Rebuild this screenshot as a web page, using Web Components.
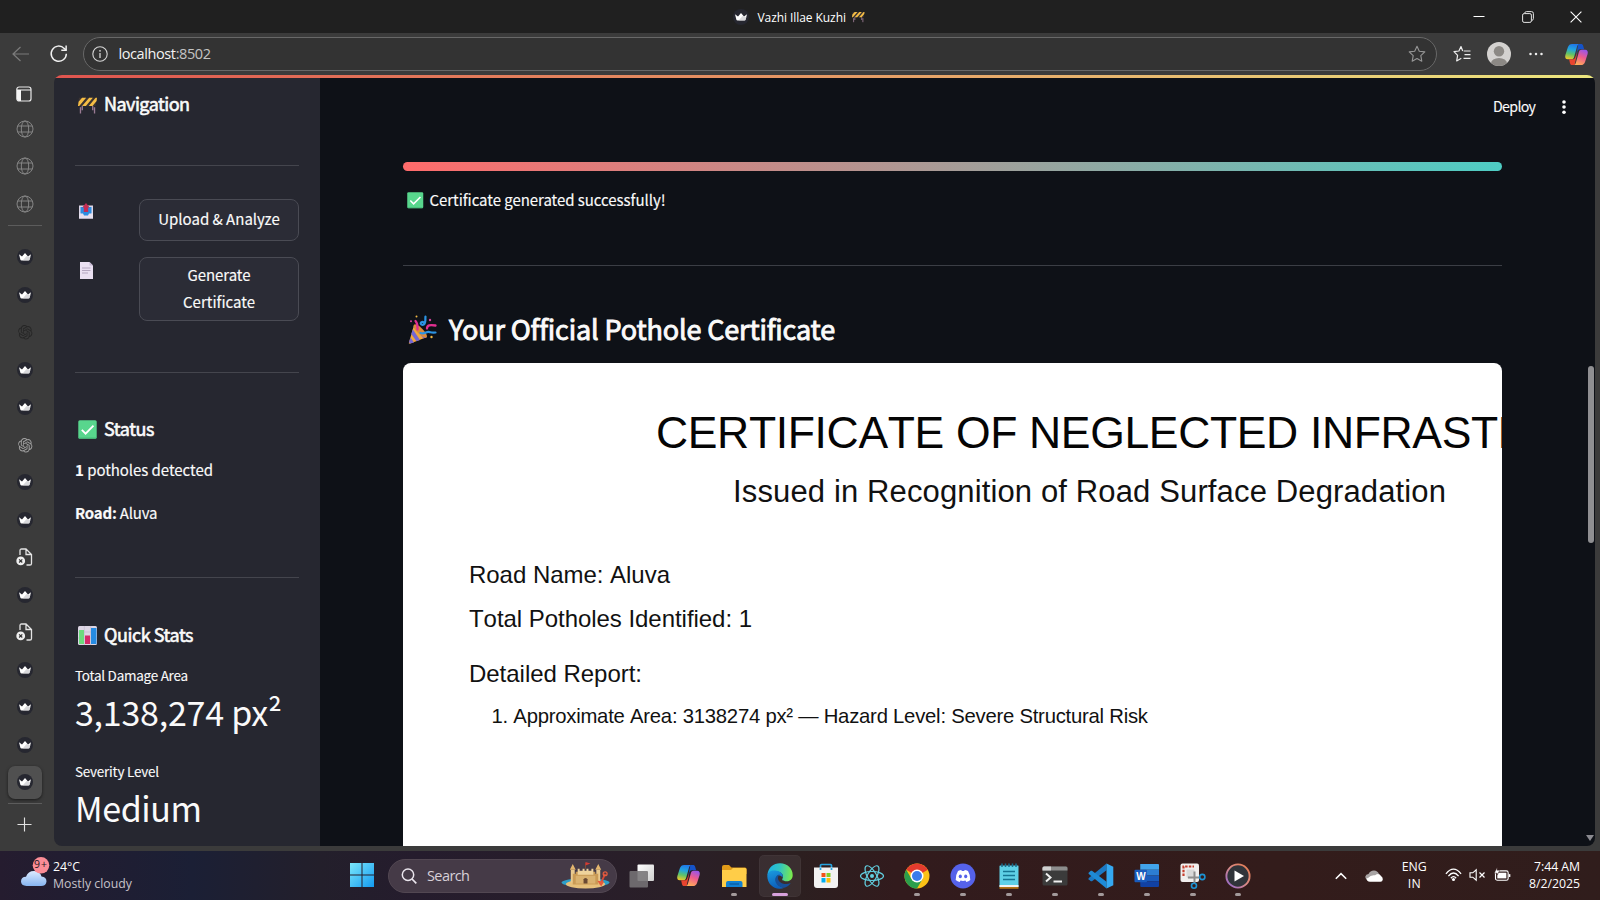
<!DOCTYPE html>
<html lang="en">
<head>
<meta charset="utf-8">
<title>Vazhi Illae Kuzhi</title>
<style>
html,body{margin:0;height:100%;background:#202020;overflow:hidden}
</style>
</head>
<body>
<desktop-screen></desktop-screen>
<script>
const crown = `<circle cx="8" cy="8" r="8" fill="#262730"/><path d="M2 5.2 5 7.6 8 3.9 11 7.6 14 5.2 12.6 10.8Q12.4 11.6 11.5 11.6H4.5Q3.6 11.6 3.4 10.8Z" fill="#fff"/><path d="M5.6 11.6 9.6 7 13.4 8.2 12.6 10.8Q12.4 11.6 11.5 11.6Z" fill="#c9c9cd" opacity=".7"/>`;
const globe = `<g fill="none" stroke="#858585" stroke-width="1"><circle cx="9" cy="9" r="8"/><ellipse cx="9" cy="9" rx="3.7" ry="8"/><path d="M1.8 6h14.4M1.8 12h14.4"/></g>`;
const petals = c => `<path fill="${c}" d="M22.2819 9.8211a5.9847 5.9847 0 0 0-.5157-4.9108 6.0462 6.0462 0 0 0-6.5098-2.9A6.0651 6.0651 0 0 0 4.9807 4.1818a5.9847 5.9847 0 0 0-3.9977 2.9 6.0462 6.0462 0 0 0 .7427 7.0966 5.98 5.98 0 0 0 .511 4.9107 6.051 6.051 0 0 0 6.5146 2.9001A5.9847 5.9847 0 0 0 13.2599 24a6.0557 6.0557 0 0 0 5.7718-4.2058 5.9894 5.9894 0 0 0 3.9977-2.9001 6.0557 6.0557 0 0 0-.7475-7.0729zm-9.022 12.6081a4.4755 4.4755 0 0 1-2.8764-1.0408l.1419-.0804 4.7783-2.7582a.7948.7948 0 0 0 .3927-.6813v-6.7369l2.02 1.1686a.071.071 0 0 1 .038.052v5.5826a4.504 4.504 0 0 1-4.4945 4.4944zm-9.6607-4.1254a4.4708 4.4708 0 0 1-.5346-3.0137l.142.0852 4.783 2.7582a.7712.7712 0 0 0 .7806 0l5.8428-3.3685v2.3324a.0804.0804 0 0 1-.0332.0615L9.74 19.9502a4.4992 4.4992 0 0 1-6.1408-1.6464zM2.3408 7.8956a4.485 4.485 0 0 1 2.3655-1.9728V11.6a.7664.7664 0 0 0 .3879.6765l5.8144 3.3543-2.0201 1.1685a.0757.0757 0 0 1-.071 0l-4.8303-2.7865A4.504 4.504 0 0 1 2.3408 7.872zm16.5963 3.8558L13.1038 8.364 15.1192 7.2a.0757.0757 0 0 1 .071 0l4.8303 2.7913a4.4944 4.4944 0 0 1-.6765 8.1042v-5.6772a.79.79 0 0 0-.407-.667zm2.0107-3.0231l-.142-.0852-4.7735-2.7818a.7759.7759 0 0 0-.7854 0L9.409 9.2297V6.8974a.0662.0662 0 0 1 .0284-.0615l4.8303-2.7866a4.4992 4.4992 0 0 1 6.6802 4.66zM8.3065 12.863l-2.02-1.1638a.0804.0804 0 0 1-.038-.0567V6.0742a4.4992 4.4992 0 0 1 7.3757-3.4537l-.142.0805L8.704 5.459a.7948.7948 0 0 0-.3927.6813zm1.0976-2.3654l2.602-1.4998 2.6069 1.4998v2.9994l-2.5974 1.4997-2.6067-1.4997Z"/>`;
const barrier = `<path d="M2.6 13v6.5M17.4 13v6.5M4.500 11v5M15.500 11v5" stroke="#9a7b94" stroke-width="1.400"/><path d="M1 3h19L18.500 11.500H0z" fill="#3c3432"/><path d="M.6 7 4.300 3H8.600L1.300 11.500H0zM4.300 11.500 11.800 3H15.600L8.300 11.500zM11.300 11.500 18.600 3H20L19.600 6.300 15.300 11.500z" fill="#f6be45"/>`;
const check = `<rect x=".3" y=".3" width="19.400" height="19.400" rx="1.600" fill="#58d68d"/><path d="M1 19h18" stroke="#45b978" stroke-width="1"/><path d="M4 10.300 8 14.400 16.300 6" fill="none" stroke="#fff" stroke-width="1.900"/>`;
const copilot = `<defs><linearGradient id="a" x1=".5" y1="0" x2=".3" y2="1"><stop stop-color="#2078e8"/><stop offset=".35" stop-color="#22a5df"/><stop offset=".65" stop-color="#5dc26a"/><stop offset="1" stop-color="#f0c92a"/></linearGradient><linearGradient id="b" x1=".7" y1="0" x2=".3" y2="1"><stop stop-color="#9a55e8"/><stop offset=".45" stop-color="#ee5b8e"/><stop offset="1" stop-color="#ffae55"/></linearGradient></defs><path d="M14 1h2.700c1.200 0 1.900.7 2.300 2l1 3.500h-4.500c-1.500 0-2.200 1-2.700 2.500L11 15z" fill="#1553c9"/><path d="M7.500 1H15c-1.500.300-2 1.400-2.500 3l-3 10.500c-.5 1.600-1.300 2.500-3 2.500H3c-2.300 0-3.300-1.800-2.600-4.500L3 4.500C3.700 2.200 5.300 1 7.500 1z" fill="url(#a)"/><path d="M10 23H7.600c-1.300 0-2-.7-2.400-2L4.300 17H8c1.600 0 2.400-1 2.900-2.700L13 9z" fill="#e8442f"/><path d="M16.500 23H9c1.500-.300 2-1.400 2.500-3l3-10.500c.5-1.600 1.300-2.500 3-2.500H21c2.300 0 3.300 1.800 2.600 4.500L21 19.500c-.7 2.300-2.300 3.500-4.500 3.500z" fill="url(#b)"/>`;
const pageX = `<g fill="none" stroke="#e4e4e4" stroke-width="1.300"><path d="M4 7V2.600Q4 1 5.600 1H10L15.500 6.500V15.400Q15.500 17 13.900 17H10.500M10 1V6.500H15.500"/></g><circle cx="4.700" cy="12.900" r="4.400" fill="#efefef"/><path d="M3.100 11.300 6.300 14.500M6.300 11.300 3.100 14.500" stroke="#333" stroke-width="1.200"/>`;
const ICONS = {
 crown:[16,16,crown], globe:[18,18,globe], gptDark:[24,24,petals('#262626')], gptLight:[24,24,petals('#a2a2a2')],
 barrier:[20,20,barrier], check:[20,20,check], copilot:[24,24,copilot], pageX:[18,18,pageX],
 back:[18,16,`<path d="M8.500 1 1 8 8.500 15M1 8H17" fill="none" stroke="#7b7b7b" stroke-width="1.200"/>`],
 reload:[18,18,`<path d="M16.800 9A7.800 7.800 0 1 1 14.600 3.500L16.500 5.200" fill="none" stroke="#f0f0f0" stroke-width="1.500"/><path d="M16.600.5V5.500H11.600" fill="none" stroke="#f0f0f0" stroke-width="1.500"/>`],
 info:[16,16,`<circle cx="8" cy="8" r="7.200" fill="none" stroke="#d6d6d6" stroke-width="1.100"/><path d="M8 7V12" stroke="#d6d6d6" stroke-width="1.300"/><circle cx="8" cy="4.800" r=".9" fill="#d6d6d6"/>`],
 panel:[16,16,`<rect x=".8" y="1" width="14.200" height="14" rx="2.300" fill="none" stroke="#e8e8e8" stroke-width="1.200"/><path d="M1 4H15" stroke="#e8e8e8" stroke-width="1.100"/><path d="M1 4H5V15H3Q1 15 1 13z" fill="#f4f4f4"/>`],
 plus:[16,16,`<path d="M8 .5V15.500M.5 8H15.500" stroke="#e2e2e2" stroke-width="1.200"/>`],
 min:[12,12,`<path d="M.5 5.500H11.500" stroke="#fff" stroke-width="1"/>`],
 restore:[12,12,`<rect x=".6" y="2.600" width="8.800" height="8.800" rx="1.500" fill="none" stroke="#e5e5e5"/><path d="M2.700 2Q3 .6 4.500.6H9.500Q11.400.6 11.400 2.500V7.500Q11.400 9 10 9.400" fill="none" stroke="#e5e5e5"/>`],
 close:[12,12,`<path d="M.6.6 11.400 11.400M11.400.6.6 11.400" stroke="#fff" stroke-width="1.100"/>`],
 star:[18,18,`<path d="M9 1.200 11.300 6.200 16.800 6.900 12.800 10.700 13.800 16.200 9 13.500 4.200 16.200 5.200 10.700 1.200 6.900 6.700 6.200Z" fill="none" stroke="#969696" stroke-width="1.100" stroke-linejoin="round"/>`],
 starList:[18,18,`<path d="M10.700 6H17.500M9.700 6 8 1.500 5.900 6 1 6.700 4.600 10.400 3.700 15.900 8.300 13.300M11.500 9.700H17.500M10.500 13.400H17.500" fill="none" stroke="#eee" stroke-width="1.200" stroke-linejoin="round"/>`],
 person:[24,24,`<clipPath id="p"><circle cx="12" cy="12" r="12"/></clipPath><circle cx="12" cy="12" r="12" fill="#d4d2d0"/><g clip-path="url(#p)" fill="#8c8985"><circle cx="12" cy="9.300" r="5.200"/><ellipse cx="12" cy="21.500" rx="8" ry="5.500"/></g>`],
 dots:[14,4,`<g fill="#eee"><circle cx="1.500" cy="2" r="1.250"/><circle cx="7" cy="2" r="1.250"/><circle cx="12.500" cy="2" r="1.250"/></g>`],
 vdots:[4,16,`<g fill="#fff"><circle cx="2" cy="3" r="1.800"/><circle cx="2" cy="8" r="1.800"/><circle cx="2" cy="13.300" r="1.800"/></g>`],
 outbox:[14,16,`<path d="M0 2.500H14V15.500H0z" fill="#dcd6e8"/><path d="M1.500 4H12.500V10.500L9.500 13H4.500L1.500 10.500z" fill="#2d8de0"/><path d="M0 10.500H4L5 12.500H9L10 10.500H14V15.500H0z" fill="#e6e0ee"/><path d="M4.800 4.500H3.200L7 0 10.800 4.500H9.200V9H4.800z" fill="#c32d54"/>`],
 page:[13,17,`<path d="M0 0H9.500L13 3.500V17H0z" fill="#eae0f2"/><path d="M9.500 0V3.500H13z" fill="#c6b9d3"/><path d="M2 6H10.500M2 8.500H10.500M2 11H8" stroke="#b4a6c0" stroke-width="1"/>`],
 chart:[19,19,`<rect width="19" height="19" rx="1.500" fill="#ddd6e4"/><path d="M6.300 0V19M12.700 0V19M0 6H19M0 12H19" stroke="#c1b7cc" stroke-width=".6"/><path d="M1 4H6V18H1z" fill="#6cdb7d"/><path d="M7 9.500H12V18H7z" fill="#d32b6a"/><path d="M13 2H18.500V18H13z" fill="#268be2"/>`],
 party:[29,29,`<path d="M6 10 1 27.500Q0 29 2.500 28.500L19 22z" fill="#f3a83c"/><path d="M4.800 14.200 12 25 8.500 26.300 3.300 19zM6.500 10 16.500 20 18.800 22 15.600 23.400 5.500 12zM2.500 22.500 6 27.500 2 28.500 1 27z" fill="#7467d3"/><ellipse cx="12.300" cy="16" rx="3" ry="9" transform="rotate(-45 12.300 16)" fill="#dc8a3a"/><path d="M7.500 6C10 8.500 9.500 11 9.500 14.500M19 13.500C19 10 22 9.500 27.500 10.500" fill="none" stroke="#e22f90" stroke-width="2.300" stroke-linecap="round"/><path d="M17.500 1.500C17 5 18.500 9.500 14.500 9.800C11.500 9.500 12.500 5.500 16 7.500M12.500 18C17 19.500 18 16.500 20.500 16.800S23 18 27.500 17.500" fill="none" stroke="#2b93e3" stroke-width="2.200" stroke-linecap="round"/><g fill="#d1439d"><circle cx="3" cy="6.200" r="1"/><circle cx="22" cy="5" r="1.200"/></g><g fill="#f0b945"><circle cx="8.500" cy="1.500" r="1"/><circle cx="23.500" cy="22" r="1.200"/></g>`],
 weather:[28,30,`<defs><linearGradient id="w" x1="0" y1="0" x2="0" y2="1"><stop stop-color="#dcebff"/><stop offset="1" stop-color="#86b4f0"/></linearGradient></defs><path d="M5.500 29Q0 28.500 0 24.500Q0 20 5 19.800Q7 14 13 14Q19 14 20.500 19.500Q25.500 20 25.500 24.500Q25 29 20 29z" fill="url(#w)"/><circle cx="20" cy="8.300" r="8.300" fill="#fb8c96"/>`],
 windows:[24,24,`<defs><linearGradient id="q" x1="0" y1="0" x2="24" y2="24" gradientUnits="userSpaceOnUse"><stop stop-color="#7ce8fb"/><stop offset="1" stop-color="#139af0"/></linearGradient></defs><path d="M0 0H11.500V11.500H0zM12.500 0H24V11.500H12.500zM0 12.500H11.500V24H0zM12.500 12.500H24V24H12.500z" fill="url(#q)"/>`],
 search:[16,16,`<circle cx="7" cy="6.800" r="5.700" fill="none" stroke="#ebe6ee" stroke-width="1.500"/><path d="M11 11 15.300 15.300" stroke="#ebe6ee" stroke-width="1.700"/>`],
 castle:[52,28,`<ellipse cx="25" cy="21" rx="24.500" ry="4.500" fill="#2d9fc9"/><ellipse cx="25" cy="22.500" rx="20" ry="4.500" fill="#e6c07b"/><path d="M10 8H14V21H10zM36 8H40V21H36z" fill="#e9c98e"/><path d="M9 8 12 2 15 8zM35 8 38 2 41 8z" fill="#e3b66e"/><path d="M12 12H15V10H18V12H20V10H23V12H27V10H29V12H32V10H35V12H38V23H12z" fill="#c99a55"/><path d="M15 14H35V22H15z" fill="#dab270"/><path d="M17 7H19V9H22V7H24V9H26V7H28V9H31V7H33V13H17z" fill="#efd39c"/><path d="M23 22V17.500Q25 15 27 17.500V22z" fill="#6a4a33"/><path d="M25 7V1" stroke="#7b4c34"/><path d="M25 0 30 1.500 25 3.500z" fill="#d53a35"/><path d="M40 23 45 12" stroke="#d84a36" stroke-width="1.800"/><circle cx="45" cy="12" r="2" fill="none" stroke="#e35d40" stroke-width="1.300"/><path d="M37 19 44 20 41 25z" fill="#e65a3c"/>`],
 taskview:[26,24,`<defs><linearGradient id="t" x2="1" y2="1"><stop stop-color="#fff"/><stop offset="1" stop-color="#cfcfcf"/></linearGradient></defs><rect x="8.500" y=".5" width="16.500" height="16.500" rx="1" fill="url(#t)"/><rect x=".5" y="7" width="18.500" height="16.500" rx="1" fill="#767476" opacity=".88"/>`],
 explorer:[26,24,`<path d="M1 3Q1 1 3 1H8L10.500 3.500H24Q25.500 3.500 25.500 5V10H1z" fill="#e19b19"/><path d="M1 6H10L12 4H24Q25.500 4 25.500 5.500V23H1z" fill="#ffcd48"/><path d="M5 23V19Q5 17 7 17H19.500Q21.500 17 21.500 19V23z" fill="#1181d2"/><path d="M8.500 20H18" stroke="#0b5c9f" stroke-width="1.300"/>`],
 edge:[26,26,`<defs><linearGradient id="e" x1="0" y1=".3" x2="1" y2=".4"><stop stop-color="#1bb4e7"/><stop offset=".5" stop-color="#33c6bd"/><stop offset="1" stop-color="#7bea4c"/></linearGradient><linearGradient id="f" x1="0" y1="0" x2=".3" y2="1"><stop stop-color="#1a9ce0"/><stop offset="1" stop-color="#0d60bb"/></linearGradient></defs><path d="M.5 12C1 4.500 6.500.3 13 .3C20.500.3 25.700 5.500 25.700 12C25.700 16 23 18.300 19.500 18.300C16.500 18.300 14.500 17.300 15.500 15.500C17.500 12 14 8.500 9.500 8.500C5 8.500 2 9.500.5 12z" fill="url(#e)"/><path d="M.3 13C.5 8.500 5 6.800 9.500 7.800C14 8.500 16.800 11.500 15.500 14.500C12 10 8 14 9 18C10 22.500 14.500 25 18 24.500C9 28.500.3 22 .3 13z" fill="url(#f)"/><path d="M10.500 12C5.500 16 9 25 18 24.500C20.500 23.500 22.500 22 23.700 20C19 22.500 11.500 20.500 11 15.500C11 13.500 11.500 12.500 13 11.500z" fill="#174f98"/>`],
 store:[26,26,`<path d="M7.500 6V2.500Q7.500 1.500 8.500 1.500H17.500Q18.500 1.500 18.500 2.500V6" fill="none" stroke="#27a4df" stroke-width="1.700"/><path d="M1 4.500H25V22Q25 25 22 25H4Q1 25 1 22z" fill="#f2f2f2"/><path d="M7.500 5V7M18.500 5V7" stroke="#27a4df" stroke-width="1.700"/><path d="M8.500 10H12.500V14H8.500z" fill="#f1511b"/><path d="M13.500 10H17.500V14H13.500z" fill="#80cc28"/><path d="M8.500 15H12.500V19.500H8.500z" fill="#00adef"/><path d="M13.500 15H17.500V19.500H13.500z" fill="#fbbc09"/>`],
 react:[26,26,`<g fill="none" stroke="#62cfe0" stroke-width="1.200"><ellipse cx="13" cy="13" rx="11.500" ry="4.500"/><ellipse cx="13" cy="13" rx="11.500" ry="4.500" transform="rotate(60 13 13)"/><ellipse cx="13" cy="13" rx="11.500" ry="4.500" transform="rotate(120 13 13)"/></g><circle cx="13" cy="13" r="2" fill="#62cfe0"/>`],
 chrome:[26,26,`<circle cx="13" cy="13" r="12.500" fill="#fbc116"/><path d="M13 13 2.200 6.700A12.500 12.500 0 0 1 23.800 6.700z" fill="#e33b2e"/><path d="M2.200 6.700A12.500 12.500 0 0 0 13 25.500L18.500 16 13 13 7.600 16z" fill="#2b9f4c"/><circle cx="13" cy="13" r="6.500" fill="#fff"/><circle cx="13" cy="13" r="5" fill="#3a7cec"/>`],
 discord:[26,26,`<circle cx="13" cy="13" r="12.500" fill="#5562ea"/><path d="M8 8Q10 7 11.300 7L11.800 8Q13 7.800 14.200 8L14.700 7Q16 7 18 8Q20.500 12 20.300 17Q18.500 18.600 16.300 19L15.500 17.600Q13 18.200 10.500 17.600L9.700 19Q7.500 18.600 5.700 17Q5.500 12 8 8z" fill="#fff"/><ellipse cx="10.300" cy="13.400" rx="1.600" ry="1.800" fill="#5562ea"/><ellipse cx="15.700" cy="13.400" rx="1.600" ry="1.800" fill="#5562ea"/>`],
 notepad:[22,26,`<path d="M2 2.500H20Q20.500 2.500 20.500 3V24H1.500V3z" fill="#5fd0e6"/><path d="M1.500 22H20.500V24H1.500z" fill="#f2f2f2"/><path d="M1.500 24H20.500V25.800H1.500z" fill="#b37414"/><path d="M4 .6V4M7.500.6V4M11 .6V4M14.500.6V4M18 .6V4" stroke="#196e8d" stroke-width="1.500"/><path d="M5 8.500H17M5 12.500H17M5 16.500H17" stroke="#167593" stroke-width="1.400"/>`],
 terminal:[26,20,`<rect x=".5" y=".5" width="25" height="19" rx="1.500" fill="#3b3b3b"/><path d="M.5 4.500V2Q.5.5 2 .5H24Q25.500.5 25.500 2V4.500z" fill="#8d8d8d"/><path d="M.5 4.500V2Q.5.5 2 .5H9V4.500z" fill="#d0d0d0"/><path d="M4 7.500 8.500 11.500 4 15.500M11.500 15.500H20" fill="none" stroke="#f0f0f0" stroke-width="2"/>`],
 vscode:[26,26,`<path d="M18.500.6V7.300L4 18.300 2.800 18.300.6 16.300Q.2 15.700.8 15.100z" fill="#1b79c5"/><path d="M18.500 25.400V18.700L4 7.700 2.800 7.700.6 9.700Q.2 10.300.8 10.900z" fill="#1e8ad6"/><path d="M18.500.6 25.300 3.800V22.200L18.500 25.400z" fill="#35a9f2"/>`],
 word:[26,24,`<path d="M6.500 0H25Q26 0 26 1V6H6.500z" fill="#42a4eb"/><path d="M6.500 6H26V12H6.500z" fill="#2c7dd3"/><path d="M6.500 12H26V18H6.500z" fill="#195abb"/><path d="M6.500 18H26V23Q26 24 25 24H7.500Q6.500 24 6.500 23z" fill="#1141a3"/><rect x=".5" y="6" width="13" height="13" rx="1" fill="#185bbd"/>`],
 snip:[26,26,`<rect x=".5" y=".5" width="18.500" height="18.500" rx="2" fill="#f1efee"/><path d="M3.500 13V3.500H14" fill="none" stroke="#c63e2e" stroke-width="2.200" stroke-dasharray="2.500 1.200"/><path d="M6.500 14V7.500Q6.500 6.500 7.500 6.500H14.500V13L12 15.500H8z" fill="#d9d9d9"/><path d="M14.500 8.500V20M8 14.500H20" stroke="#8d8d8d" stroke-width="2"/><g fill="none" stroke="#1c93d4" stroke-width="1.600"><circle cx="22.300" cy="14" r="2.600"/><circle cx="14" cy="22.800" r="2.500"/></g>`],
 media:[26,26,`<defs><linearGradient id="m" x1="0" y1="1" x2="1" y2="0"><stop stop-color="#8d66d5"/><stop offset=".5" stop-color="#d98a86"/><stop offset="1" stop-color="#e57a4c"/></linearGradient></defs><circle cx="13" cy="13" r="11.600" fill="#30343a" stroke="url(#m)" stroke-width="1.900"/><path d="M9.500 7.500 19 13 9.500 18.500z" fill="#fff"/>`],
 chev:[12,8,`<path d="M.8 6.800 6 1.600 11.200 6.800" fill="none" stroke="#fff" stroke-width="1.500"/>`],
 cloud:[18,12,`<path d="M3.500 10Q.2 9.500.3 6.500Q.8 4 3.500 4Q5 .5 9 .5Q12.500.5 14 4z" fill="#a8a4a4"/><path d="M5 11.800Q1.500 11.500 1.500 8.500L3 8Q6 4.500 10 5.300Q14 2.500 16 6Q18 7 17.800 9.500Q17.500 11.800 15.500 11.800z" fill="#fff"/>`],
 wifi:[18,14,`<g fill="none" stroke="#fff" stroke-width="1.400"><path d="M1 6.200Q9-3.800 17 6.200M3.600 8.600Q9 2 14.400 8.600M6.200 10.800Q9 7.600 11.800 10.800"/></g><circle cx="9" cy="12.200" r="1.600" fill="#fff"/>`],
 mute:[18,12,`<path d="M1 3.800H3.800L7.200.8V11.200L3.800 8.200H1z" fill="none" stroke="#fff" stroke-width="1.100"/><path d="M10.500 3.500 15.500 8.500M15.500 3.500 10.500 8.500" stroke="#fff" stroke-width="1.200"/>`],
 battery:[18,14,`<rect x="1.600" y="3" width="13.400" height="10" rx="2" fill="none" stroke="#fff" stroke-width="1.200"/><rect x="3.500" y="5" width="9.600" height="6" fill="#fff"/><path d="M16.500 6.500V9.500" stroke="#fff" stroke-width="1.600"/><path d="M.3 5.500 3.300-.5V2.500H6L3.500 7.500V5.500z" fill="#fff" stroke="#331c1b" stroke-width=".5"/>`]
};
class UiIcon extends HTMLElement{
 connectedCallback(){
  const [w,h,m]=ICONS[this.getAttribute('name')], W=this.getAttribute('w')||w, H=this.getAttribute('h')||h*W/w;
  this.attachShadow({mode:'open'}).innerHTML=`<style>:host{display:block;flex:none;width:${W}px;height:${H}px}svg{display:block;overflow:visible}</style><svg width="${W}" height="${H}" viewBox="0 0 ${w} ${h}" preserveAspectRatio="none">${m}</svg>`;
 }
}
customElements.define('ui-icon',UiIcon);

/* One line of text whose tracking is tuned so that it takes the width in "w".
   "semi" thickens the regular face slightly, "dy" nudges the baseline. */
class TextLine extends HTMLElement{
 connectedCallback(){
  const a=n=>this.getAttribute(n);
  const fam={app:'"Noto Sans CJK SC","Source Sans Pro",sans-serif',ui:'"Open Sans","Segoe UI",sans-serif',doc:'"Liberation Sans",Arial,sans-serif'}[a('font')||'app'];
  this.attachShadow({mode:'open'}).innerHTML=`<style>:host{display:block;flex:none;white-space:nowrap;font-family:${fam};font-size:${a('size')}px;font-weight:${a('weight')||400};line-height:${a('lh')||24}px;${a('font')==='doc'?'font-kerning:none;':''}${a('semi')?`-webkit-text-stroke:${a('semi')}px currentColor;`:''}}span{display:inline-block;transform:translateY(${a('dy')||0}px)}</style><span><slot></slot></span>`;
  const s=this.shadowRoot.querySelector('span'), w=+a('w');
  if(w){const n=this.textContent.length, r=s.getBoundingClientRect().width; s.style.letterSpacing=((w-r)/(n-1))+'px'; s.style.marginRight=(-(w-r)/(n-1))+'px';}
 }
}
customElements.define('text-line',TextLine);

const def=(tag,css,html)=>customElements.define(tag,class extends HTMLElement{
 connectedCallback(){ if(this.shadowRoot)return; this.attachShadow({mode:'open'}).innerHTML=`<style>*{box-sizing:border-box}${css}</style>${html}`; }
});

def('title-bar',`:host{display:flex;height:33px;background:#202020;color:#fff;align-items:center}
 .t{display:flex;align-items:center;margin-left:732.500px;flex:1}.t text-line{margin:0 6px 0 9px}
 .w{display:flex;align-items:center;gap:36.300px;margin-right:18px}`,
 `<div class="t"><ui-icon name="crown" w="16"></ui-icon><text-line font="ui" size="12" w="88.500" dy=".5">Vazhi Illae Kuzhi</text-line><ui-icon name="barrier" w="12.500"></ui-icon></div>
 <div class="w"><ui-icon name="min"></ui-icon><ui-icon name="restore"></ui-icon><ui-icon name="close"></ui-icon></div>`);

def('address-bar',`:host{display:flex;height:42px;background:#3b3b3b;align-items:center;padding-left:12px}
 .u{display:flex;align-items:center;height:34px;width:1354px;margin-left:15.500px;border:1px solid #686868;border-radius:17px;background:#333;color:#f2f2f2;padding:0 10px 0 8px}
 .u text-line{margin-left:11px;flex:1}.sp{width:19.500px}`,
 `<ui-icon name="back" w="18"></ui-icon><div class="sp"></div><ui-icon name="reload" w="17.500"></ui-icon>
 <div class="u"><ui-icon name="info"></ui-icon><text-line font="ui" size="14.500" w="92.500">localhost<span style="color:#c4c4c4">:8502</span></text-line><ui-icon name="star"></ui-icon></div>
 <ui-icon name="starList" style="margin-left:16px"></ui-icon><ui-icon name="person" style="margin-left:16px"></ui-icon><ui-icon name="dots" style="margin-left:18px"></ui-icon><ui-icon name="copilot" w="23" style="margin-left:22px"></ui-icon>`);

const rail=['crown','crown','gptDark','crown','crown','gptLight','crown','crown','pageX','crown','pageX','crown','crown','crown','crown'];
def('tab-rail',`:host{display:flex;flex-direction:column;width:54px;height:776px;background:#3b3b3b;padding:0 4px 0 0;align-items:center}
 .c{height:37.500px;width:50px;display:flex;align-items:center;justify-content:center;flex:none}
 .d{width:34px;height:1px;background:#5c5c5c;flex:none}
 .on{width:34px;height:33px;border-radius:7px;background:#505050;box-shadow:0 1px 3px #1a1a1a;display:flex;align-items:center;justify-content:center}`,
 `<div class="c" style="height:35px;padding-top:3px;padding-right:2px"><ui-icon name="panel"></ui-icon></div>
 <div class="c"><ui-icon name="globe"></ui-icon></div><div class="c"><ui-icon name="globe"></ui-icon></div><div class="c"><ui-icon name="globe"></ui-icon></div>
 <div class="d" style="margin:2.500px 0 12.500px"></div>
 ${rail.map((n,i)=>`<div class="c"${n==='pageX'?' style="padding-right:1px"':''}>${i===14?'<div class="on"><ui-icon name="crown"></ui-icon></div>':`<ui-icon name="${n}" ${n.startsWith('gpt')?'w="14.500"':''}></ui-icon>`}</div>`).join('')}
 <div class="d" style="margin-top:2px"></div><div class="c" style="height:41px;padding-right:1px"><ui-icon name="plus" w="15"></ui-icon></div>`);

def('section-heading',`:host{display:flex;align-items:center;height:24px;padding-left:3px;color:#fafafa}`,`<slot></slot>`);
def('nav-button',`:host{display:flex;box-sizing:border-box;flex-direction:column;align-items:center;justify-content:center;width:160px;margin-left:auto;background:#2b2c36;border:1px solid #4a4b54;border-radius:8px;color:#fafafa}`,`<slot></slot>`);

def('side-bar',`:host{box-sizing:border-box;display:block;width:266px;height:771px;background:#262730;color:#fafafa;padding:17px 21px 0}
 hr{height:1px;border:0;margin:0;background:#44454d}.r{display:flex;align-items:flex-start}.r nav-button{align-self:stretch}section-heading ui-icon{margin-right:7px}`,
 `<section-heading><ui-icon name="barrier" w="19"></ui-icon><text-line size="18" semi=".6" w="86" dy="-1.500">Navigation</text-line></section-heading>
 <hr style="margin-top:49px">
 <div class="r" style="margin-top:33px;height:42px"><ui-icon name="outbox" style="margin:4px 0 0 4px"></ui-icon><nav-button><text-line size="15" semi=".15" w="121.500" dy="-1">Upload &amp; Analyze</text-line></nav-button></div>
 <div class="r" style="margin-top:16px;height:64px"><ui-icon name="page" style="margin:5px 0 0 5px"></ui-icon><nav-button><text-line size="15" semi=".15" w="63" lh="26.500" dy="-1">Generate</text-line><text-line size="15" semi=".15" w="72" lh="26.500" dy="-.5">Certificate</text-line></nav-button></div>
 <hr style="margin-top:51px">
 <section-heading style="margin-top:44px"><ui-icon name="check" w="19"></ui-icon><text-line size="18" semi=".6" w="50.500" dy="-1">Status</text-line></section-heading>
 <text-line style="margin-top:17px" size="15" semi=".15" w="138"><b>1</b> potholes detected</text-line>
 <text-line style="margin-top:20px" size="15" semi=".15" w="82.500" dy="-1"><b>Road:</b> Aluva</text-line>
 <hr style="margin-top:51px">
 <section-heading style="margin-top:45px"><ui-icon name="chart" w="19"></ui-icon><text-line size="18" semi=".6" w="89.500" dy="-1.500">Quick Stats</text-line></section-heading>
 <text-line style="margin-top:19px" size="13.500" lh="20" semi=".1" w="113" dy="-1">Total Damage Area</text-line>
 <text-line style="margin-top:4px" size="34" lh="48" w="207" dy="-2">3,138,274 px²</text-line>
 <text-line style="margin-top:24px" size="13.500" lh="20" semi=".1" w="84" dy="-1">Severity Level</text-line>
 <text-line style="margin-top:4px" size="34" lh="48" w="127" dy="-2">Medium</text-line>`);

def('certificate-card',`:host{box-sizing:border-box;display:block;height:483px;background:#fff;border-radius:8px 8px 0 0;overflow:hidden;color:#111;padding:45px 0 0}`,
 `<text-line font="doc" size="44.500" lh="50" w="874" style="margin-left:253px;color:#050505">CERTIFICATE OF NEGLECTED INFRASTR</text-line>
 <text-line font="doc" size="31" lh="36" w="713" style="margin:16px 0 0 330px">Issued in Recognition of Road Surface Degradation</text-line>
 <text-line font="doc" size="24" lh="28" w="201" style="margin:51px 0 0 66px">Road Name: Aluva</text-line>
 <text-line font="doc" size="24" lh="28" w="283" style="margin:16px 0 0 66px">Total Potholes Identified: 1</text-line>
 <text-line font="doc" size="24" lh="28" w="173" style="margin:27px 0 0 66px">Detailed Report:</text-line>
 <text-line font="doc" size="20.300" lh="24" w="656.500" style="margin:16px 0 0 88.500px">1. Approximate Area: 3138274 px² — Hazard Level: Severe Structural Risk</text-line>`);

def('main-pane',`:host{box-sizing:border-box;display:block;flex:1;height:771px;background:#0e1117;color:#fafafa;padding:0 0 0 83px}
 .h{display:flex;height:87px;align-items:center;justify-content:flex-end;padding:0 29px 24px 0}
 .c{width:1099px}.bar{height:9px;border-radius:5px;background:linear-gradient(90deg,#ff6b6b,#4ecdc4)}
 .s{display:flex;align-items:center;height:24px;margin-top:17px;padding-left:4px}
 hr{height:1px;border:0;margin:53px 0 0;background:#3b3e45}
 .t{display:flex;align-items:center;height:36px;margin:46px 0 15px;padding-left:5px}`,
 `<div class="h"><text-line size="14.200" semi=".1" w="43" dy="-1" style="margin-right:26px">Deploy</text-line><ui-icon name="vdots"></ui-icon></div>
 <div class="c"><div class="bar"></div>
 <div class="s"><ui-icon name="check" w="16.500" style="margin-right:6px"></ui-icon><text-line size="15" semi=".15" w="236">Certificate generated successfully!</text-line></div>
 <hr><div class="t"><ui-icon name="party" w="29" style="margin:-2px 12px 0 0"></ui-icon><text-line size="27" lh="36" semi=".9" w="386" dy="-1.500">Your Official Pothole Certificate</text-line></div>
 <certificate-card></certificate-card></div>`);

def('page-view',`:host{display:flex;position:relative;width:1541px;height:771px;border-radius:8px;overflow:hidden}
 .g{position:absolute;left:0;right:0;top:0;height:3px;background:linear-gradient(90deg,#e0554f,#e69a65 50%,#ece77f)}
 .th{position:absolute;right:1px;top:291px;width:6px;height:177px;border-radius:3px;background:#8f8f92}
 .ar{position:absolute;right:1px;bottom:5px;border:4px solid transparent;border-top:6px solid #8a8a90;border-bottom:0}`,
 `<side-bar></side-bar><main-pane></main-pane><div class="g"></div><div class="th"></div><div class="ar"></div>`);

def('task-app',`:host{display:flex;width:45.850px;height:49px;position:relative;align-items:center;justify-content:center}
 .b{display:flex;width:42px;height:42px;align-items:center;justify-content:center;border-radius:5px}
 :host([active]) .b{background:#ffffff12;box-shadow:inset 0 0 0 1px #ffffff08}
 i{position:absolute;bottom:4px;left:50%;width:6px;height:3px;margin-left:-3px;border-radius:2px;background:#a39a9b;display:none}
 :host([run]) i{display:block}:host([active]) i{display:block;width:16px;margin-left:-8px;background:#d8a1dc}`,
 `<div class="b"><slot></slot></div><i></i>`);

const apps=[['taskview',''],['copilot',''],['explorer','run'],['edge','active'],['store',''],['react',''],['chrome','run'],['discord','run'],['notepad','run'],['terminal','run'],['vscode','run'],['word','run'],['snip','run'],['media','run']];
def('task-bar',`:host{display:flex;height:49px;align-items:center;color:#fff;background:linear-gradient(90deg,#251c2f 0,#1b1f35 12%,#231f2b 20%,#251c2d 26%,#2a1f28 42%,#2c1f20 50%,#321b1d 56%,#331c1b 80%,#301d1c 100%);position:relative}
 .w{display:flex;width:350px;padding-left:21px}.w ui-icon{margin-top:-2px}.w div{padding-left:4px}
 .b{position:absolute;left:34px;top:5px}
 .s{display:flex;align-items:center;width:229px;height:34px;border-radius:17px;background:#453a47;margin:0 2.500px 0 14px;border:1px solid #524752;padding:0 4px 0 12px}
 .s text-line{margin-left:10px;flex:1;color:#d7d0d8}.a{display:flex}
 .y{display:flex;flex:1;align-items:center}.c{display:flex;flex-direction:column;align-items:center}.e{align-items:flex-end}`,
 `<div class="w"><ui-icon name="weather" w="28"></ui-icon><div><text-line font="ui" size="12.300" lh="17" w="27" dy="-1">24°C</text-line><text-line font="ui" size="12.300" lh="17" w="79" dy="-1" style="color:#c6c2ca">Mostly cloudy</text-line></div></div>
 <text-line class="b" font="ui" size="10.500" lh="17" w="13" style="color:#241a22">9+</text-line>
 <ui-icon name="windows" style="margin-top:-1px"></ui-icon>
 <div class="s"><ui-icon name="search"></ui-icon><text-line font="ui" size="14.500" w="43">Search</text-line><ui-icon name="castle" w="51"></ui-icon></div>
 <div class="a">${apps.map(([n,s])=>`<task-app ${s}>${n==='word'?'<div style="position:relative"><ui-icon name="word" w="25"></ui-icon><text-line font="doc" size="10" lh="13" weight="700" style="position:absolute;left:2px;top:6px;color:#fff">W</text-line></div>':`<ui-icon name="${n}" ${n==='copilot'?'w="23"':''}></ui-icon>`}</task-app>`).join('')}</div>
 <div class="y"><ui-icon name="chev" style="margin-left:73.500px"></ui-icon><ui-icon name="cloud" style="margin-left:18px"></ui-icon>
 <div class="c" style="margin-left:19px"><text-line font="ui" size="12.300" lh="16.500" w="25">ENG</text-line><text-line font="ui" size="12.300" lh="16.500" w="13">IN</text-line></div>
 <ui-icon name="wifi" w="17" style="margin:-2px 0 0 18px"></ui-icon><ui-icon name="mute" style="margin:-1px 0 0 7px"></ui-icon><ui-icon name="battery" w="17" style="margin:-2px 0 0 7px"></ui-icon>
 <div class="c e" style="margin-left:auto;margin-right:20px"><text-line font="ui" size="12.300" lh="17" w="46" dy="-1">7:44 AM</text-line><text-line font="ui" size="12.300" lh="17" w="51" dy="-1">8/2/2025</text-line></div></div>`);

def('desktop-screen',`:host{display:block;width:1600px;height:900px;overflow:hidden;background:#3b3b3b}.m{display:flex;height:776px}`,
 `<title-bar></title-bar><address-bar></address-bar><div class="m"><tab-rail></tab-rail><page-view></page-view></div><task-bar></task-bar>`);
</script>
</body>
</html>
